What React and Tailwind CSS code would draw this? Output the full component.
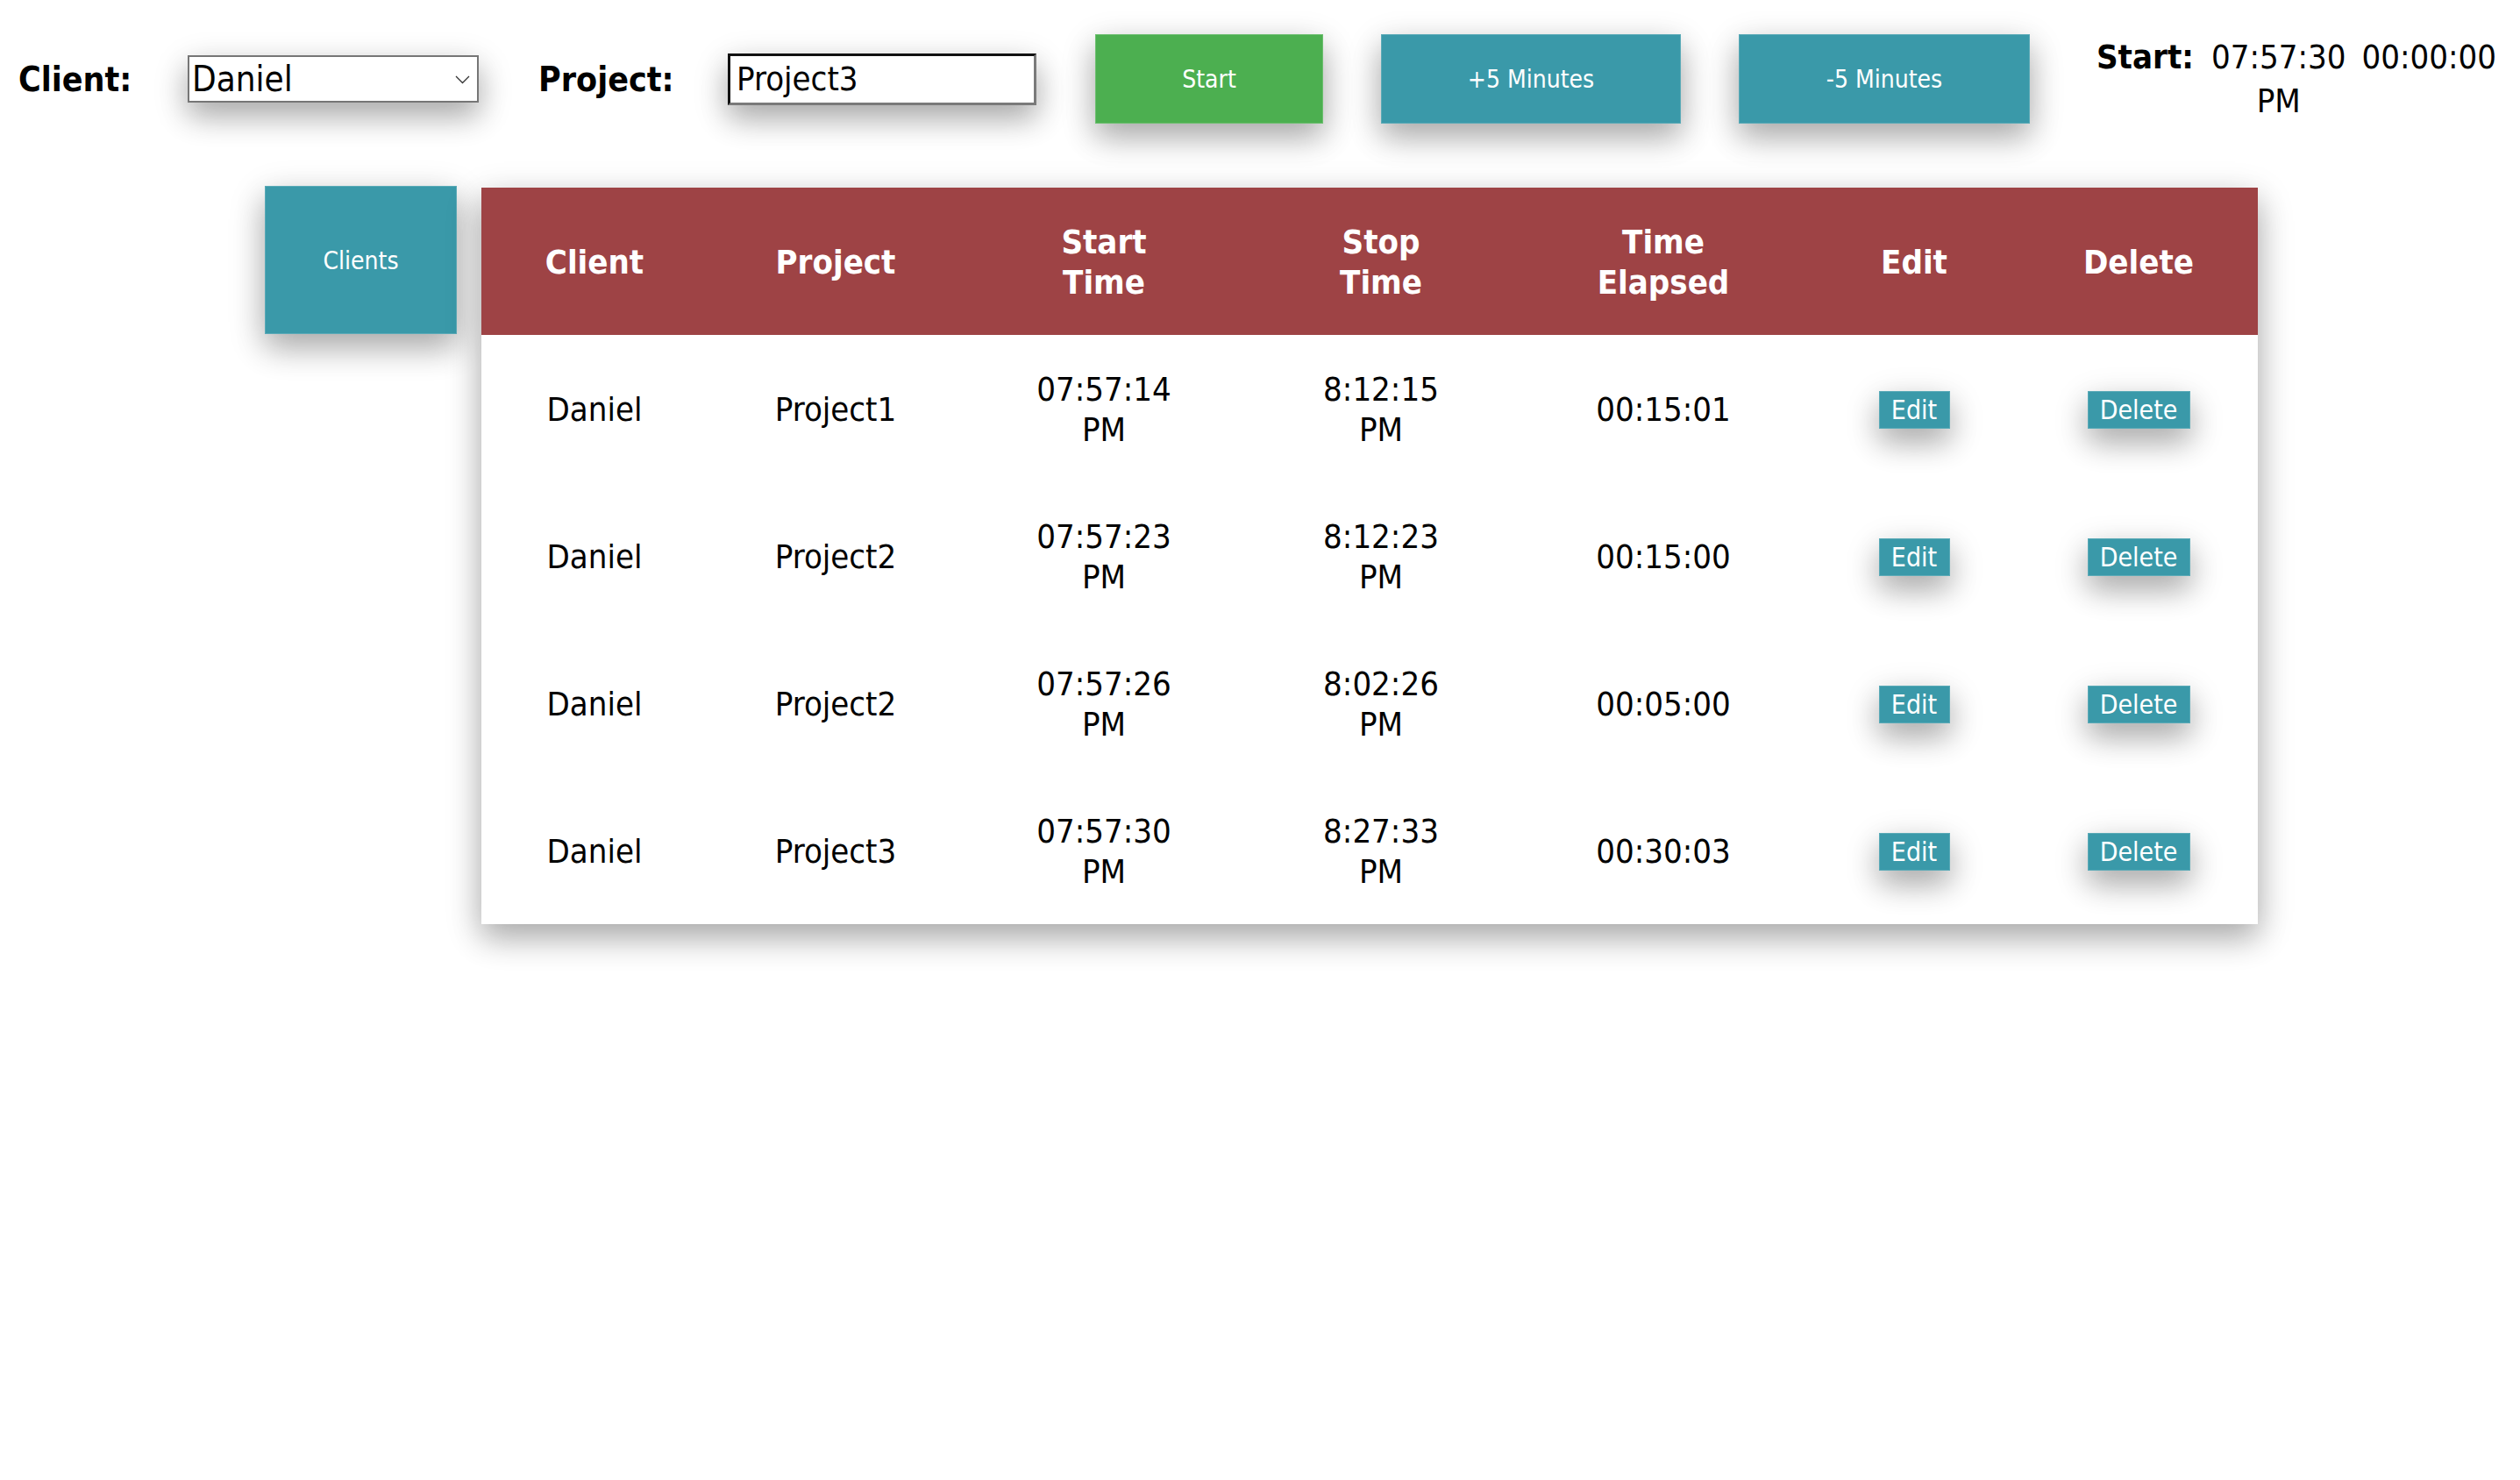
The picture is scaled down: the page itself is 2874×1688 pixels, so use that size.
import React from "react";

const SH = "shadow-[0_16px_32px_0_rgba(0,0,0,0.2),0_12px_40px_0_rgba(0,0,0,0.19)]";

const rows = [
  ["Daniel", "Project1", "07:57:14", "8:12:15", "00:15:01"],
  ["Daniel", "Project2", "07:57:23", "8:12:23", "00:15:00"],
  ["Daniel", "Project2", "07:57:26", "8:02:26", "00:05:00"],
  ["Daniel", "Project3", "07:57:30", "8:27:33", "00:30:03"],
];

function Cell({ children }) {
  return (
    <div className="flex items-center justify-center pt-[2px] text-center">{children}</div>
  );
}

export default function App() {
  return (
    <div
      className="min-h-[1688px] w-full bg-white text-black"
      style={{ fontFamily: '"DejaVu Sans Condensed", "DejaVu Sans", Tahoma, sans-serif' }}
    >
      {/* Top bar */}
      <div className="flex h-[180px] items-center pl-[21px]">
        <span className="w-[193px] text-[39px] font-bold leading-none">Client:</span>
        <div className={`relative h-[54px] w-[332px] ${SH}`}>
          <select
            className="h-full w-full appearance-none border-2 border-[#767676] bg-white pl-[3px] text-[40px] leading-none text-black outline-none"
            defaultValue="Daniel"
            style={{ fontFamily: "inherit" }}
          >
            <option>Daniel</option>
          </select>
          <svg
            className="pointer-events-none absolute right-[10px] top-[23px]"
            width="17"
            height="10"
            viewBox="0 0 17 10"
            fill="none"
          >
            <path d="M1 1 L8.5 8.5 L16 1" stroke="#333" strokeWidth="1.3" />
          </svg>
        </div>
        <span className="ml-[68px] w-[216px] text-[39px] font-bold leading-none">Project:</span>
        <input
          readOnly
          value="Project3"
          className={`h-[59px] w-[352px] border-[3px] border-b-[#7a7a7a] border-l-[#111] border-r-[#7a7a7a] border-t-[#111] bg-white pl-[7px] text-[38px] leading-none text-black outline-none ${SH}`}
          style={{ fontFamily: "inherit" }}
        />
        <button
          className={`ml-[67px] h-[102px] w-[260px] border border-[#6cbf6f] bg-[#4caf50] pt-[2px] text-[28px] text-white ${SH}`}
        >
          Start
        </button>
        <button
          className={`ml-[66px] h-[102px] w-[342px] border border-[#5aaab7] bg-[#3a99a9] pt-[2px] text-[28px] text-white ${SH}`}
        >
          +5 Minutes
        </button>
        <button
          className={`ml-[66px] h-[102px] w-[332px] border border-[#5aaab7] bg-[#3a99a9] pt-[2px] text-[28px] text-white ${SH}`}
        >
          -5 Minutes
        </button>
        <div className="ml-[76px] flex items-start text-[38px] leading-[50px]">
          <span className="font-bold">Start:</span>
          <span className="ml-[20px] text-center">
            07:57:30
            <br />
            PM
          </span>
          <span className="ml-[18px]">00:00:00</span>
        </div>
      </div>

      {/* Main */}
      <div className="mt-[32px] flex items-start justify-center gap-[28px] pl-[3px]">
        <button
          className={`h-[169px] w-[219px] border border-[#5aaab7] bg-[#3a99a9] pt-[2px] text-[28px] text-white ${SH}`}
        >
          Clients
        </button>
        <div className={`mt-[2px] w-[2026px] bg-white ${SH}`}>
          <div className="grid h-[168px] grid-cols-[258px_292px_320px_312px_332px_240px_272px] bg-[#9e4345] text-[38px] font-bold leading-[46px] text-white">
            <Cell>Client</Cell>
            <Cell>Project</Cell>
            <Cell>
              Start
              <br />
              Time
            </Cell>
            <Cell>
              Stop
              <br />
              Time
            </Cell>
            <Cell>
              Time
              <br />
              Elapsed
            </Cell>
            <Cell>Edit</Cell>
            <Cell>Delete</Cell>
          </div>
          {rows.map((r, i) => (
            <div
              key={i}
              className="grid h-[168px] grid-cols-[258px_292px_320px_312px_332px_240px_272px] text-[38px] leading-[46px]"
            >
              <Cell>{r[0]}</Cell>
              <Cell>{r[1]}</Cell>
              <Cell>
                {r[2]}
                <br />
                PM
              </Cell>
              <Cell>
                {r[3]}
                <br />
                PM
              </Cell>
              <Cell>{r[4]}</Cell>
              <Cell>
                <button
                  className={`h-[43px] w-[81px] border border-[#5aaab7] bg-[#3a99a9] pt-[2px] text-[30px] leading-none text-white ${SH}`}
                >
                  Edit
                </button>
              </Cell>
              <Cell>
                <button
                  className={`h-[43px] w-[117px] border border-[#5aaab7] bg-[#3a99a9] pt-[2px] text-[30px] leading-none text-white ${SH}`}
                >
                  Delete
                </button>
              </Cell>
            </div>
          ))}
        </div>
      </div>
    </div>
  );
}
